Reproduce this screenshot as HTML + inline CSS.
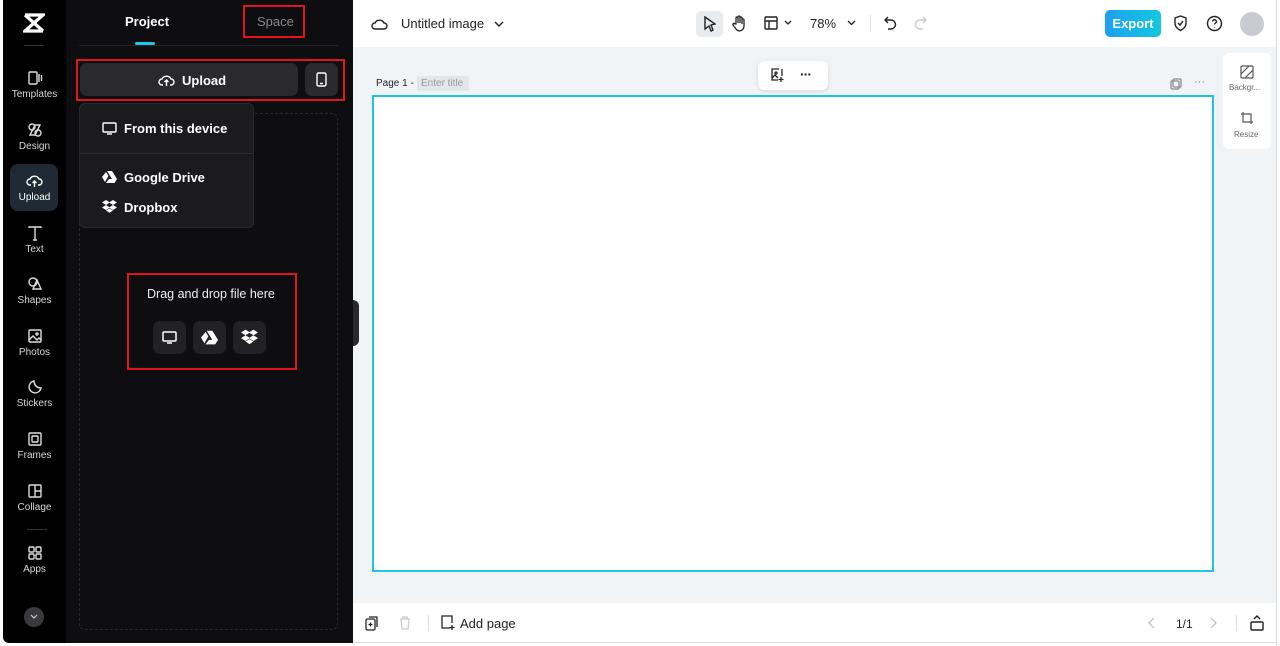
<!DOCTYPE html>
<html><head><meta charset="utf-8"><style>
*{box-sizing:border-box;margin:0;padding:0}
body{width:1280px;height:646px;background:#fff;font-family:"Liberation Sans",sans-serif;position:relative;overflow:hidden}
.abs{position:absolute}
#side{left:3px;top:0;width:63px;height:643px;background:#000;border-radius:0 0 0 6px}
#panel{left:66px;top:0;width:287px;height:643px;background:#0e0e10}
.nav{position:absolute;left:0;width:63px;text-align:center;color:#d8d8d8;font-size:10px}
.nav svg{display:block;margin:0 auto 3px}
.w{color:#fff;font-size:13px;font-weight:bold}
.red{position:absolute;border:2px solid #e0141e}
.ib{position:absolute;width:33px;height:33px;background:#222226;border-radius:7px}
.ib svg{position:absolute;left:8px;top:8px}
.tb{position:absolute;top:0;height:47px;display:flex;align-items:center}
</style></head><body>
<div class="abs" id="side">
 <svg class="abs" style="left:20px;top:13px" width="22" height="20" viewBox="0 0 22 20"><path d="M2 2h18L2 18h18M2 2l18 16" stroke="#fff" stroke-width="3.2" fill="none"/></svg>
 <div class="abs" style="left:21px;top:45px;width:20px;height:1px;background:#333"></div>
 <div class="nav" style="top:70px"><svg width="16" height="16" viewBox="0 0 16 16" fill="none" stroke="#ddd" stroke-width="1.4"><rect x="2" y="2" width="8" height="12" rx="1"/><path d="M12 4v8M14.5 5v6"/></svg>Templates</div>
 <div class="nav" style="top:122px"><svg width="16" height="16" viewBox="0 0 16 16" fill="none" stroke="#ddd" stroke-width="1.4"><circle cx="5" cy="5" r="3"/><circle cx="11" cy="11" r="3"/><path d="M8 3l5 0-5 10H3z"/></svg>Design</div>
 <div class="abs" style="left:7px;top:164px;width:48px;height:47px;background:#1f2a35;border-radius:8px"></div>
 <div class="nav" style="top:173px;color:#fff"><svg width="17" height="16" viewBox="0 0 17 16" fill="none" stroke="#fff" stroke-width="1.4"><path d="M5 12H4a3 3 0 010-6 5 5 0 019 0 3 3 0 010 6h-1M8.5 14V8M6.5 10l2-2 2 2"/></svg>Upload</div>
 <div class="nav" style="top:225px"><svg width="16" height="16" viewBox="0 0 16 16" fill="none" stroke="#ddd" stroke-width="1.4"><path d="M2 3V2h12v1M8 2v13M6 15h4"/></svg>Text</div>
 <div class="nav" style="top:276px"><svg width="16" height="16" viewBox="0 0 16 16" fill="none" stroke="#ddd" stroke-width="1.4"><circle cx="6" cy="6" r="4"/><path d="M10 4l4 9H6z"/></svg>Shapes</div>
 <div class="nav" style="top:328px"><svg width="16" height="16" viewBox="0 0 16 16" fill="none" stroke="#ddd" stroke-width="1.4"><rect x="2" y="2" width="12" height="12" rx="1"/><path d="M2 12l4-4 4 4 2-2 2 2"/><circle cx="10" cy="6" r="1"/></svg>Photos</div>
 <div class="nav" style="top:379px"><svg width="16" height="16" viewBox="0 0 16 16" fill="none" stroke="#ddd" stroke-width="1.4"><path d="M14 9A6 6 0 117 2c0 3 2 7 7 7z"/></svg>Stickers</div>
 <div class="nav" style="top:431px"><svg width="16" height="16" viewBox="0 0 16 16" fill="none" stroke="#ddd" stroke-width="1.4"><rect x="2" y="2" width="12" height="12" rx="1"/><rect x="5" y="5" width="6" height="6" rx="1"/></svg>Frames</div>
 <div class="nav" style="top:483px"><svg width="16" height="16" viewBox="0 0 16 16" fill="none" stroke="#ddd" stroke-width="1.4"><rect x="2" y="2" width="12" height="12" rx="1"/><path d="M8 2v12M8 8h6"/></svg>Collage</div>
 <div class="abs" style="left:24px;top:529px;width:20px;height:1px;background:#333"></div>
 <div class="nav" style="top:545px"><svg width="16" height="16" viewBox="0 0 16 16" fill="none" stroke="#ddd" stroke-width="1.4"><rect x="2" y="2" width="5" height="5" rx="1"/><rect x="9" y="2" width="5" height="5" rx="1"/><rect x="2" y="9" width="5" height="5" rx="1"/><rect x="9" y="9" width="5" height="5" rx="1"/></svg>Apps</div>
 <div class="abs" style="left:21px;top:607px;width:20px;height:20px;border-radius:50%;background:#3a3a3e"><svg style="position:absolute;left:6px;top:7px" width="8" height="6" viewBox="0 0 8 6"><path d="M1 1l3 3 3-3" stroke="#ccc" fill="none" stroke-width="1.2"/></svg></div>
</div>
<div class="abs" id="panel">
 <div class="abs w" style="left:59px;top:14px">Project</div>
 <div class="abs" style="left:69px;top:42px;width:20px;height:3px;background:#1fc4e0;border-radius:2px"></div>
 <div class="abs" style="left:191px;top:14px;color:#888;font-size:13px">Space</div>
 <div class="abs" style="left:13px;top:45px;width:259px;height:1px;background:#232326"></div>
 <div class="abs" style="left:14px;top:63px;width:218px;height:33px;background:#2a2a2e;border-radius:7px"></div>
 <svg class="abs" style="left:92px;top:73px" width="17" height="14" viewBox="0 0 17 14" fill="none" stroke="#fff" stroke-width="1.4"><path d="M5 12H4a3 3 0 010-6 5 5 0 019 0 3 3 0 010 6h-1M8.5 13V7M6.5 9l2-2 2 2"/></svg>
 <div class="abs w" style="left:116px;top:73px">Upload</div>
 <div class="abs" style="left:239px;top:63px;width:33px;height:33px;background:#2a2a2e;border-radius:7px"><svg style="position:absolute;left:11px;top:9px" width="11" height="15" viewBox="0 0 11 15" fill="none" stroke="#fff" stroke-width="1.4"><rect x="1" y="1" width="9" height="13" rx="1.5"/><path d="M4 11.5h3"/></svg></div>
 <div class="abs" style="left:13px;top:113px;width:259px;height:517px;border:1px dashed #2a2a2e;border-radius:6px"></div>
 <div class="abs" style="left:13px;top:103px;width:175px;height:125px;background:#1b1b1e;border:1px solid #2a2a2e;border-radius:6px">
  <svg class="abs" style="left:22px;top:18px" width="15" height="13" viewBox="0 0 15 13" fill="none" stroke="#fff" stroke-width="1.4"><rect x="1" y="1" width="13" height="9" rx="1"/><path d="M5 12h5"/></svg>
  <div class="abs w" style="left:44px;top:17px">From this device</div>
  <div class="abs" style="left:0;top:49px;width:173px;height:1px;background:#2e2e32"></div>
  <svg class="abs" style="left:22px;top:66px" width="15" height="13" viewBox="0 0 15 13" fill="#fff"><path d="M5 1h5l5 8h-5zM4 2l2.5 4L3 12 0 7zM7 9h8l-2.5 4H4z"/></svg>
  <div class="abs w" style="left:44px;top:66px">Google Drive</div>
  <svg class="abs" style="left:22px;top:96px" width="15" height="13" viewBox="0 0 15 13" fill="#fff"><path d="M4 0l4 2.5-4 2.5-4-2.5zM11 0l4 2.5-4 2.5-4-2.5zM4 5l4 2.5-4 2.5-4-2.5zM11 5l4 2.5-4 2.5-4-2.5zM7.5 8.5l3.5 2-3.5 2.3-3.5-2.3z"/></svg>
  <div class="abs w" style="left:44px;top:96px">Dropbox</div>
 </div>
 <div class="abs" style="left:81px;top:287px;color:#eee;font-size:12.5px">Drag and drop file here</div>
 <div class="ib" style="left:87px;top:321px"><svg width="17" height="16" viewBox="0 0 17 16" fill="none" stroke="#fff" stroke-width="1.5"><rect x="2" y="3" width="13" height="9" rx="1"/><path d="M6 14h5"/></svg></div>
 <div class="ib" style="left:127px;top:321px"><svg width="17" height="16" viewBox="0 0 15 13" fill="#fff"><path d="M5 1h5l5 8h-5zM4 2l2.5 4L3 12 0 7zM7 9h8l-2.5 4H4z"/></svg></div>
 <div class="ib" style="left:167px;top:321px"><svg width="17" height="16" viewBox="0 0 15 13" fill="#fff"><path d="M4 0l4 2.5-4 2.5-4-2.5zM11 0l4 2.5-4 2.5-4-2.5zM4 5l4 2.5-4 2.5-4-2.5zM11 5l4 2.5-4 2.5-4-2.5zM7.5 8.5l3.5 2-3.5 2.3-3.5-2.3z"/></svg></div>
</div>
<div class="red" style="left:243px;top:5px;width:62px;height:33px"></div>
<div class="red" style="left:76px;top:59px;width:269px;height:42px"></div>
<div class="red" style="left:127px;top:273px;width:170px;height:97px"></div>
<div class="abs" style="left:353px;top:300px;width:6px;height:46px;background:#2a2a2e;border-radius:0 6px 6px 0"></div>
<!-- canvas area -->
<div class="abs" style="left:359px;top:47px;width:917px;height:556px;background:#f1f4f7"></div>
<div class="abs" style="left:353px;top:47px;width:6px;height:253px;background:#f1f4f7"></div>
<div class="abs" style="left:353px;top:346px;width:6px;height:257px;background:#f1f4f7"></div>
<div class="abs" style="left:1276px;top:0;width:4px;height:646px;background:#fff;border-left:1px solid #ddd"></div>
<div class="tb" style="left:371px"><svg width="17" height="14" viewBox="0 0 17 14" fill="none" stroke="#222" stroke-width="1.4"><path d="M5 12H4a3 3 0 010-6 5 5 0 019 0 3 3 0 010 6z"/></svg><span style="font-size:13px;color:#222;margin-left:13px">Untitled image</span><svg style="margin-left:10px" width="10" height="6" viewBox="0 0 10 6"><path d="M1 1l4 4 4-4" stroke="#222" fill="none" stroke-width="1.4"/></svg></div>
<div class="abs" style="left:696px;top:11px;width:27px;height:26px;background:#e9ecef;border-radius:5px"></div>
<svg class="abs" style="left:703px;top:16px" width="13" height="16" viewBox="0 0 13 16" fill="none" stroke="#222" stroke-width="1.4"><path d="M2 1l10 7-4 1 2 5-2 1-2-5-4 3z"/></svg>
<svg class="abs" style="left:732px;top:15px" width="15" height="17" viewBox="0 0 15 17" fill="none" stroke="#222" stroke-width="1.3"><path d="M4 9V3a1 1 0 012 0v5V2a1 1 0 012 0v6V3a1 1 0 012 0v6V5a1 1 0 012 0v6a5 5 0 01-5 5H8a5 5 0 01-4-2L1 10a1 1 0 012-1z"/></svg>
<svg class="abs" style="left:764px;top:16px" width="14" height="14" viewBox="0 0 14 14" fill="none" stroke="#222" stroke-width="1.4"><rect x="1" y="1" width="12" height="12" rx="1"/><path d="M1 5h12M5 5v8"/></svg>
<svg class="abs" style="left:784px;top:20px" width="8" height="5" viewBox="0 0 8 5"><path d="M1 1l3 3 3-3" stroke="#222" fill="none" stroke-width="1.3"/></svg>
<div class="abs" style="left:810px;top:16px;font-size:13px;color:#222">78%</div>
<svg class="abs" style="left:847px;top:20px" width="9" height="6" viewBox="0 0 9 6"><path d="M1 1l3.5 3.5L8 1" stroke="#222" fill="none" stroke-width="1.3"/></svg>
<div class="abs" style="left:870px;top:15px;width:1px;height:17px;background:#ddd"></div>
<svg class="abs" style="left:884px;top:16px" width="13" height="14" viewBox="0 0 13 14" fill="none" stroke="#222" stroke-width="1.4"><path d="M4 1L1 4l3 3M1 4h6a4 4 0 010 9H4"/></svg>
<svg class="abs" style="left:914px;top:16px" width="13" height="14" viewBox="0 0 13 14" fill="none" stroke="#ccc" stroke-width="1.4"><path d="M9 1l3 3-3 3M12 4H6a4 4 0 000 9h3"/></svg>
<div class="abs" style="left:1105px;top:10px;width:56px;height:27px;border-radius:5px;background:linear-gradient(90deg,#1ea0f0,#12c8e0);color:#fff;font-weight:bold;font-size:13px;text-align:center;line-height:27px">Export</div>
<svg class="abs" style="left:1173px;top:15px" width="15" height="17" viewBox="0 0 15 17" fill="none" stroke="#222" stroke-width="1.4"><path d="M7.5 1L2 3v5c0 4 3 6 5.5 7.5C10 14 13 12 13 8V3z M5 8l2 2 3-4"/></svg>
<svg class="abs" style="left:1206px;top:15px" width="17" height="17" viewBox="0 0 17 17" fill="none" stroke="#222" stroke-width="1.4"><circle cx="8.5" cy="8.5" r="7"/><path d="M6.5 6.5a2 2 0 114 .5c-.5 1-2 1.3-2 2.5M8.5 12v.5"/></svg>
<div class="abs" style="left:1240px;top:12px;width:24px;height:24px;border-radius:50%;background:#c8ccd2"></div>
<!-- page -->
<div class="abs" style="left:376px;top:78px;font-size:10px;color:#222">Page 1 -</div>
<div class="abs" style="left:417px;top:76px;width:52px;height:15px;background:#e3e6ea;border-radius:2px;font-size:10px;color:#999;padding:2px 0 0 4px">Enter title</div>
<div class="abs" style="left:758px;top:61px;width:70px;height:29px;background:#fff;border-radius:6px;box-shadow:0 1px 4px rgba(0,0,0,.12)"></div>
<svg class="abs" style="left:770px;top:68px" width="15" height="15" viewBox="0 0 15 15" fill="none" stroke="#222" stroke-width="1.3"><path d="M9 1H2v11h6M12 1v7M11 9v5M8.5 11.5h5"/><circle cx="6" cy="5" r="1"/><path d="M2 10l3-3 3 3"/></svg>
<div class="abs" style="left:800px;top:66px;font-size:14px;font-weight:bold;color:#222;letter-spacing:-1px">···</div>
<svg class="abs" style="left:1170px;top:78px" width="12" height="12" viewBox="0 0 12 12" fill="none" stroke="#888" stroke-width="1.2"><rect x="3" y="1" width="8" height="8" rx="1"/><rect x="1" y="3" width="8" height="8" rx="1"/></svg>
<div class="abs" style="left:1194px;top:76px;font-size:11px;color:#888">···</div>
<div class="abs" style="left:372px;top:95px;width:842px;height:477px;background:#fff;border:2px solid #1fc4e0"></div>
<div class="abs" style="left:1223px;top:53px;width:48px;height:96px;background:#fff;border-radius:6px"></div>
<svg class="abs" style="left:1240px;top:65px" width="14" height="14" viewBox="0 0 14 14" fill="none" stroke="#555" stroke-width="1.2"><rect x="1" y="1" width="12" height="12" rx="1"/><path d="M1 9l8-8M5 13l8-8"/></svg>
<div class="abs" style="left:1229px;top:83px;font-size:8px;color:#666">Backgr...</div>
<svg class="abs" style="left:1240px;top:111px" width="14" height="14" viewBox="0 0 14 14" fill="none" stroke="#555" stroke-width="1.2"><path d="M3 1v10h10M1 3h10v10"/></svg>
<div class="abs" style="left:1234px;top:130px;font-size:8px;color:#666">Resize</div>
<!-- bottom -->
<div class="abs" style="left:353px;top:603px;width:923px;height:40px;background:#fff;border-bottom:1px solid #ddd"></div>
<svg class="abs" style="left:365px;top:616px" width="14" height="15" viewBox="0 0 14 15" fill="none" stroke="#222" stroke-width="1.3"><rect x="1" y="3" width="9" height="11" rx="1.5"/><path d="M4 1h8v10M5.5 6.5v4M3.5 8.5h4"/></svg>
<svg class="abs" style="left:399px;top:616px" width="12" height="14" viewBox="0 0 12 14" fill="none" stroke="#ccc" stroke-width="1.3"><path d="M1 3h10M4 3V1h4v2M2 3l1 10h6l1-10"/></svg>
<div class="abs" style="left:428px;top:615px;width:1px;height:16px;background:#ddd"></div>
<svg class="abs" style="left:441px;top:615px" width="15" height="16" viewBox="0 0 15 16" fill="none" stroke="#222" stroke-width="1.3"><path d="M9 13H1V1h10v7M11 10v5M8.5 12.5h5"/></svg>
<div class="abs" style="left:460px;top:616px;font-size:13px;color:#222">Add page</div>
<svg class="abs" style="left:1148px;top:617px" width="7" height="12" viewBox="0 0 7 12"><path d="M6 1L1 6l5 5" stroke="#bbb" fill="none" stroke-width="1.2"/></svg>
<div class="abs" style="left:1176px;top:617px;font-size:12px;color:#222">1/1</div>
<svg class="abs" style="left:1210px;top:617px" width="7" height="12" viewBox="0 0 7 12"><path d="M1 1l5 5-5 5" stroke="#bbb" fill="none" stroke-width="1.2"/></svg>
<div class="abs" style="left:1236px;top:615px;width:1px;height:16px;background:#ddd"></div>
<svg class="abs" style="left:1250px;top:615px" width="14" height="16" viewBox="0 0 14 16" fill="none" stroke="#222" stroke-width="1.4"><rect x="1" y="7" width="12" height="8" rx="1"/><path d="M4 4l3-3 3 3"/></svg>
</body></html>
